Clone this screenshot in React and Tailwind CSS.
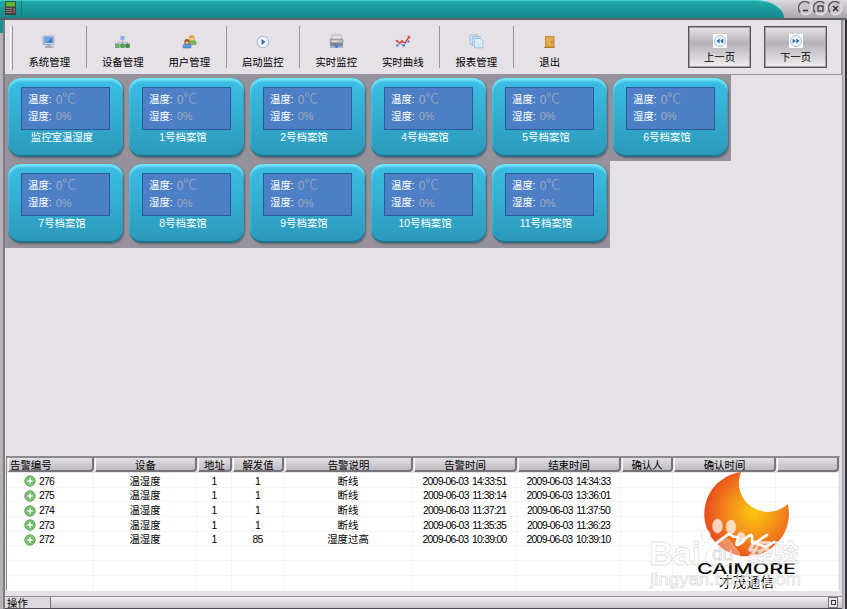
import { useState } from "react";
import { clsx } from "clsx";

const rooms = [
  ["监控室温湿度", "1号档案馆", "2号档案馆", "4号档案馆", "5号档案馆", "6号档案馆"],
  ["7号档案馆", "8号档案馆", "9号档案馆", "10号档案馆", "11号档案馆"],
];

const columns = [
  { title: "告警编号", width: "w-[87px]" },
  { title: "设备", width: "w-[103px]" },
  { title: "地址", width: "w-[35px]" },
  { title: "解发值", width: "w-[52px]" },
  { title: "告警说明", width: "w-[129px]" },
  { title: "告警时间", width: "w-[104px]" },
  { title: "结束时间", width: "w-[104px]" },
  { title: "确认人", width: "w-[52px]" },
  { title: "确认时间", width: "w-[103px]" },
  { title: "", width: "w-[63px]" },
];

const alarms = [
  ["276", "温湿度", "1", "1", "断线", "2009-06-03 14:33:51", "2009-06-03 14:34:33", "", "", ""],
  ["275", "温湿度", "1", "1", "断线", "2009-06-03 11:38:14", "2009-06-03 13:36:01", "", "", ""],
  ["274", "温湿度", "1", "1", "断线", "2009-06-03 11:37:21", "2009-06-03 11:37:50", "", "", ""],
  ["273", "温湿度", "1", "1", "断线", "2009-06-03 11:35:35", "2009-06-03 11:36:23", "", "", ""],
  ["272", "温湿度", "1", "85", "湿度过高", "2009-06-03 10:39:00", "2009-06-03 10:39:10", "", "", ""],
];

const MonitorIcon = () => (
  <svg width="14" height="14" viewBox="0 0 14 14">
    <rect x="1" y="1" width="11" height="8.5" rx="1" fill="#c3cfe2" stroke="#8496b5" strokeWidth=".7" />
    <rect x="2.5" y="2.3" width="8" height="5.5" fill="#3f78cd" />
    <path d="M2.5 2.3h8L4.500 7.800h-2z" fill="#6fa3e6" />
    <path d="M5.500 9.500h3v1.500h3v2H3v-2h2.500z" fill="#a3abbb" />
    <rect x="10.500" y="9" width="2" height="4" fill="#c8cfda" />
  </svg>
);

const TreeIcon = () => (
  <svg width="15" height="14" viewBox="0 0 15 14">
    <rect x="5.500" y="1" width="4" height="4" fill="#85aee6" stroke="#b5c9e8" strokeWidth=".6" />
    <path d="M7.500 5v4M2.500 9V7.300h10V9" fill="none" stroke="#a5a9bc" strokeWidth=".8" />
    <rect x=".6" y="9" width="3.600" height="3.600" fill="#6cb36c" stroke="#4b9650" strokeWidth=".6" />
    <rect x="5.700" y="9" width="3.600" height="3.600" fill="#55a558" stroke="#3e8742" strokeWidth=".6" />
    <rect x="10.800" y="9" width="3.600" height="3.600" fill="#3e9444" stroke="#2c7c33" strokeWidth=".6" />
  </svg>
);

const UsersIcon = () => (
  <svg width="15" height="15" viewBox="0 0 15 15">
    <path d="M6.500 11V8c0-2 6.500-3 7.500 0v2.500z" fill="#7db84e" stroke="#5c9838" strokeWidth=".5" />
    <circle cx="9.800" cy="3.800" r="2.900" fill="#e3a33a" />
    <path d="M8 4.400c1-1 3-.7 3.800 0-.2 2.600-3.400 2.600-3.800 0z" fill="#f6d6a6" />
    <path d="M1 14v-2.500c1-3 7-3 8 0V14z" fill="#5a95dd" stroke="#3a72bb" strokeWidth=".5" />
    <circle cx="5" cy="7.700" r="2.700" fill="#9c5a2c" />
    <path d="M3.300 8.200c1-1 2.600-.7 3.400 0-.2 2.400-3.200 2.400-3.400 0z" fill="#efc295" />
  </svg>
);

const PlayIcon = () => (
  <svg width="14" height="14" viewBox="0 0 14 14">
    <circle cx="7" cy="7" r="5.700" fill="#f3f8fe" stroke="#a5bbd6" strokeWidth="1.100" />
    <path d="M5.500 4l4 3-4 3z" fill="#2f6ba8" />
  </svg>
);

const PrinterIcon = () => (
  <svg width="15" height="15" viewBox="0 0 15 15">
    <path d="M3.300 1h8.400l1.300 4.500H2z" fill="#e3e3e6" stroke="#96969c" strokeWidth=".7" />
    <rect x="1" y="5.200" width="13" height="3.800" rx="1" fill="#bdbdc3" stroke="#76767d" strokeWidth=".6" />
    <rect x="1" y="9" width="13" height="3" rx=".8" fill="#85858d" />
    <path d="M3 7.200h6" stroke="#f4f4f4" strokeWidth=".9" />
    <path d="M.8 13h13.400" stroke="#5d7fae" strokeWidth="1" />
    <circle cx="7.500" cy="12.300" r="1.700" fill="#3d7edb" />
  </svg>
);

const CurveIcon = () => (
  <svg width="16" height="15" viewBox="0 0 16 15">
    <path d="M2 11.500l3.500-2 3 2.500 3-3.500" fill="none" stroke="#6f92d8" strokeWidth=".9" />
    <path d="M1.800 7l2.700 2 2.500-1.500 3 1.500 1.500-2.500L14.300 3" fill="none" stroke="#d3332e" strokeWidth="1.300" />
    <g fill="#e0564e">
      <circle cx="2" cy="7" r="1.300" />
      <circle cx="7" cy="7.500" r="1.400" />
      <circle cx="14" cy="3" r="1.500" />
    </g>
    <g fill="#5886dc">
      <circle cx="2.300" cy="11.500" r="1.200" />
      <circle cx="8.500" cy="11.300" r="1.400" />
      <circle cx="13.500" cy="7.500" r="1.200" />
    </g>
  </svg>
);

const ReportIcon = () => (
  <svg width="15" height="15" viewBox="0 0 15 15">
    <g fill="#d6e9f8" stroke="#86b0d4" strokeWidth=".8">
      <rect x="1" y="1" width="8" height="9" rx=".5" />
      <rect x="3.300" y="2.800" width="8" height="9" rx=".5" />
      <path d="M5.600 4.600h6l2.400 2.300v6.900H5.600z" fill="#e8f4fd" />
    </g>
    <path d="M7.300 8h5M7.300 10h5M7.300 12h5" stroke="#a7d0ea" strokeWidth=".8" />
  </svg>
);

const DoorIcon = () => (
  <svg width="13" height="14" viewBox="0 0 13 14">
    <rect x="2" y="1" width="9.500" height="11" fill="#c98b35" />
    <rect x="3.200" y="2" width="6.800" height="9.200" fill="#e2a950" />
    <path d="M1 12.500h11" stroke="#b57b31" strokeWidth="1" />
    <rect x="8.400" y="6.500" width="1" height="1.500" fill="#8d5b1a" />
  </svg>
);

const AddIcon = () => (
  <svg width="12" height="12" viewBox="0 0 12 12">
    <circle cx="6" cy="6" r="5.200" fill="#6db763" stroke="#55984f" strokeWidth=".9" />
    <circle cx="6" cy="6" r="4.200" fill="none" stroke="#9bd392" strokeWidth=".7" />
    <path d="M6 3.300v5.400M3.300 6h5.400" stroke="#fff" strokeWidth="1.500" />
  </svg>
);

const toolbarGroups = [
  [{ label: "系统管理", Icon: MonitorIcon }],
  [
    { label: "设备管理", Icon: TreeIcon },
    { label: "用户管理", Icon: UsersIcon },
  ],
  [{ label: "启动监控", Icon: PlayIcon }],
  [
    { label: "实时监控", Icon: PrinterIcon },
    { label: "实时曲线", Icon: CurveIcon },
  ],
  [{ label: "报表管理", Icon: ReportIcon }],
  [{ label: "退出", Icon: DoorIcon }],
];

const WindowButton = ({ children }) => (
  <button className="block h-[15px] w-[15px]">
    <svg width="15" height="15" viewBox="0 0 15 15">
      <circle cx="7.500" cy="7.500" r="6.300" fill="#c9c6ca" stroke="#f2f0f2" strokeWidth="1" />
      <path d="M2.300 11.500A6.200 6.200 0 0 1 11.500 2.500" fill="none" stroke="#5f5c62" strokeWidth="1.600" />
      <g fill="none" stroke="#333136" strokeWidth="1.500">{children}</g>
    </svg>
  </button>
);

const TitleBar = () => (
  <div className="flex h-5 shrink-0 border-b-2 border-[#5d6167] bg-linear-to-b from-[#dcd9dd] to-[#aaa6ac]">
    <div className="flex h-[18px] w-[784px] rounded-tr-[28px_18px] border-t border-[#3fd0d0] bg-linear-to-b from-[#22a9aa] to-[#14878b]">
      <div className="flex w-[22px] justify-center border-r border-[#147d80]">
        <svg width="11" height="14" viewBox="0 0 11 14">
          <rect width="11" height="14" rx=".5" fill="#4a4040" />
          <rect x="1" y="1" width="9" height="4.500" fill="#58b735" />
          <path d="M1 7.500h6M1 9.500h6M1 11.500h6" stroke="#877a78" strokeWidth="1" />
          <rect x="8" y="7" width="2" height="5" fill="#6e5f5f" />
        </svg>
      </div>
    </div>
    <div className="flex flex-1 pt-px pl-[13.500px]">
      <WindowButton>
        <path d="M5 9.500h5" />
      </WindowButton>
      <WindowButton>
        <rect x="5" y="5" width="5" height="5" strokeWidth="1.200" />
      </WindowButton>
      <WindowButton>
        <path d="M5 5l5 5M10 5l-5 5" />
      </WindowButton>
    </div>
  </div>
);

const PageButton = ({ label, back, onClick }) => (
  <button
    onClick={onClick}
    className="flex h-[42px] w-[63px] flex-col items-center border border-[#56535a] bg-linear-to-b from-[#e9e6e9] via-[#b5b1b7] via-40% to-[#f1eef2] pt-[7px] shadow-[inset_0_0_0_1px_#a19ea4]"
  >
    <svg width="14" height="14" viewBox="0 0 14 14" className="bg-white">
      <circle cx="7" cy="7" r="5.500" fill="#edf6fd" stroke="#9fbfdc" strokeWidth="1" />
      <path
        d={back ? "M6.700 4.500v5L3.500 7zM10.300 4.500v5L7.100 7z" : "M3.700 4.500v5L6.900 7zM7.300 4.500v5L10.500 7z"}
        fill="#2b6ea9"
      />
    </svg>
    <span className="mt-[3px] leading-[14px]">{label}</span>
  </button>
);

const Toolbar = ({ onPage }) => (
  <div className="flex h-[55px] shrink-0 border-r border-b border-[#96939a] pt-[6px] pr-[14px]">
    <div className="mr-[3px] ml-[5px] h-[44px] w-[3px] border-r border-l border-r-[#98959b] border-l-white" />
    {toolbarGroups.map((group, i) => (
      <div key={i} className="flex">
        {i > 0 && <div className="mr-[3px] ml-[3px] h-[42px] w-px bg-[#98959b]" />}
        {group.map(({ label, Icon }) => (
          <button key={label} className="flex w-[66.500px] flex-col items-center pt-2">
            <span className="flex h-[15px] items-center">
              <Icon />
            </span>
            <span className="mt-[7px] leading-[14px]">{label}</span>
          </button>
        ))}
      </div>
    ))}
    <div className="ml-auto flex gap-[13px]">
      <PageButton label="上一页" back onClick={() => onPage(-1)} />
      <PageButton label="下一页" onClick={() => onPage(1)} />
    </div>
  </div>
);

const RoomCard = ({ name }) => (
  <div className="h-[86.300px] w-[121px] bg-[#96929b] pt-[3px] pl-[3px]">
    <div className="h-[79px] w-[115px] rounded-[13px] border-b-2 border-[#24718a] bg-linear-to-b from-[#3cbfe6] to-[#2b9abb] pt-[9px] pl-[13px] text-white shadow-[inset_0_3px_2px_#6fe3f5,inset_-1px_0_1px_#2585a3,1px_1px_2px_#605d68]">
      <div className="h-[43px] w-[89px] border border-[#285a9c] bg-[#4c7fc6] pt-[3px] pl-[6px]">
        <div className="flex h-[17px] items-center gap-[4px] whitespace-nowrap">
          <span>温度:</span>
          <span className="flex items-center font-light text-[#a3abbd]">
            <span className="text-[12px]">0</span>
            <span className="-mt-[2px] text-[14px] leading-[17px]">℃</span>
          </span>
        </div>
        <div className="flex h-[17px] items-center gap-[4px] whitespace-nowrap">
          <span>湿度:</span>
          <span className="text-[11px] font-light text-[#a3abbd]">0%</span>
        </div>
      </div>
      <div className="w-[82px] text-center leading-[15px] whitespace-nowrap">{name}</div>
    </div>
  </div>
);

const Logo = () => (
  <svg className="absolute top-[8px] -right-px text-black" width="200" height="126" viewBox="640 466 200 126">
    <defs>
      <radialGradient id="flame" gradientUnits="userSpaceOnUse" cx="754" cy="512" r="48">
        <stop offset="0" stopColor="#fbc70d" />
        <stop offset=".5" stopColor="#f4911b" />
        <stop offset="1" stopColor="#ea4f1c" />
      </radialGradient>
    </defs>
    <path d="M741 472A42.300 42.300 0 1 0 787.700 504A29 29 0 0 1 741 472z" fill="url(#flame)" />
    <text x="697" y="574" textLength="99" lengthAdjust="spacingAndGlyphs" fontSize="14.500" fontFamily="Inter, sans-serif" fontWeight="500">
      CAIMORE
    </text>
    <text x="719" y="587" textLength="55" fontSize="13.500">
      才茂通信
    </text>
    <g fill="#fff" fillOpacity=".7" stroke="#cfcbd0" strokeOpacity=".6" strokeWidth=".8">
      <text x="649" y="564.500" fontSize="33" fontFamily="Liberation Sans, sans-serif" fontWeight="700" textLength="52" lengthAdjust="spacingAndGlyphs">
        Bai
      </text>
      <ellipse cx="706" cy="536" rx="4.500" ry="6.500" />
      <ellipse cx="717.500" cy="526" rx="5" ry="7" />
      <ellipse cx="731" cy="527" rx="5" ry="7" />
      <ellipse cx="741" cy="538" rx="4.500" ry="6" />
      <path
        d="M724 538c7 0 9 8 14 13 5 7 2 14-5 14h-20c-8 0-10-8-5-14 5-4 7-13 16-13z"
        fillOpacity=".3"
      />
      <text x="712" y="560" fontSize="19" fontFamily="Liberation Sans, sans-serif" stroke="#b9b4ba">
        du
      </text>
      <text x="748" y="562" fontSize="25" textLength="51" lengthAdjust="spacingAndGlyphs" fontWeight="700">
        经验
      </text>
      <text x="650" y="585" fontSize="16.500" fontFamily="Liberation Sans, sans-serif" textLength="151" lengthAdjust="spacingAndGlyphs" fillOpacity=".6">
        jingyan.baidu.com
      </text>
    </g>
    {/* brush stroke across the flame */}
    <path
      d="M713 546c7-5 12-10 16-12 3 0 1 3 7 3s-2 6 1 8c5 0 7-8 14-10 3 1-1 7 2 9 5-2 8-6 14-9M757 544l9 3 8-5"
      fill="none"
      stroke="#fff"
      strokeWidth="2.600"
      strokeLinecap="round"
      strokeLinejoin="round"
    />
  </svg>
);

const AlarmTable = ({ selected, onSelect }) => (
  <div className="relative mr-[2px] ml-px h-[135px] overflow-hidden border-t-2 border-r border-b border-l border-t-[#8c8990] border-r-[#dcd8dd] border-b-white border-l-[#8c8990] bg-white">
    <div className="flex h-[15px] bg-[#e6e2e7]">
      {columns.map(({ title, width }, i) => (
        <div key={i} className={clsx(width, "shrink-0 pl-px")}>
          <div
            className={clsx(
              "h-[14px] rounded-br-[4px] border-r-2 border-b-2 border-[#77737a] border-l border-l-white bg-linear-to-b from-[#e3e0e4] to-[#bfbbc1] leading-[15px] whitespace-nowrap",
              i === 0 ? "pl-px text-left" : "text-center"
            )}
          >
            {title}
          </div>
        </div>
      ))}
    </div>
    <div>
      {[...alarms, [], [], []].map((row, r) => (
        <div
          key={r}
          onClick={() => row[0] && onSelect(row[0])}
          className={clsx("flex h-[14.700px] border-b border-[#f5f4f7]", row[0] && selected === row[0] && "bg-blue-50")}
        >
          {columns.map(({ width }, c) => (
            <div
              key={c}
              className={clsx(
                width,
                "flex h-full shrink-0 items-center border-r border-[#f3f2f5] pt-[3px] whitespace-nowrap",
                c === 0 ? "gap-[3px] pl-[17px]" : "justify-center",
                c !== 1 && c !== 4 && "tracking-[-0.74px] [word-spacing:1.5px]"
              )}
            >
              {c === 0 && row[0] && <AddIcon />}
              {row[c]}
            </div>
          ))}
        </div>
      ))}
    </div>
    <Logo />
  </div>
);

const StatusBar = () => (
  <div className="mt-[5px] flex h-[12px] border-t border-[#8f8c93] bg-linear-to-b from-[#f3f1f3] to-[#c7c3c9]">
    <div className="w-[45px] overflow-hidden bg-[#dcd8dd] pl-[2px] leading-[13px]">操作</div>
    <div className="flex flex-1 items-center justify-end border-l border-[#77747b] pr-[4px]">
      <div className="flex h-[11px] w-[10px] items-center justify-center border border-[#77747b] bg-[#e9e6ea]">
        <div className="h-[5px] w-[5px] border border-[#3c3a40]" />
      </div>
    </div>
  </div>
);

export default function App() {
  const [page, setPage] = useState(1);
  const [selected, setSelected] = useState(null);

  return (
    <div className="flex h-[609px] w-[847px] flex-col overflow-hidden bg-[#e6e1e7] font-['Liberation_Sans','Noto_Sans_CJK_SC',sans-serif] text-[10.400px] text-black">
      <TitleBar />
      <div className="flex min-h-0 flex-1">
        {/* window frame, left edge */}
        <div className="flex w-[5px] flex-col border-r-2 border-[#7d7a81] bg-[#b5b1b7]">
          <div className="h-[13px] bg-[#1a9497]" />
        </div>
        <div className="flex min-w-0 flex-1 flex-col border-b border-[#4e4c52]">
          <Toolbar onPage={(step) => setPage(Math.max(1, page + step))} />
          <div className="min-h-0 flex-1">
            {rooms.map((row, i) => (
              <div key={i} className="flex">
                {row.map((name) => (
                  <RoomCard key={name} name={name} />
                ))}
              </div>
            ))}
          </div>
          <AlarmTable selected={selected} onSelect={setSelected} />
          <StatusBar />
        </div>
        <div className="w-[5px] border-r-2 border-l border-r-[#34323a] border-l-[#9d9aa1] bg-[#c3bfc5]" />
      </div>
    </div>
  );
}
